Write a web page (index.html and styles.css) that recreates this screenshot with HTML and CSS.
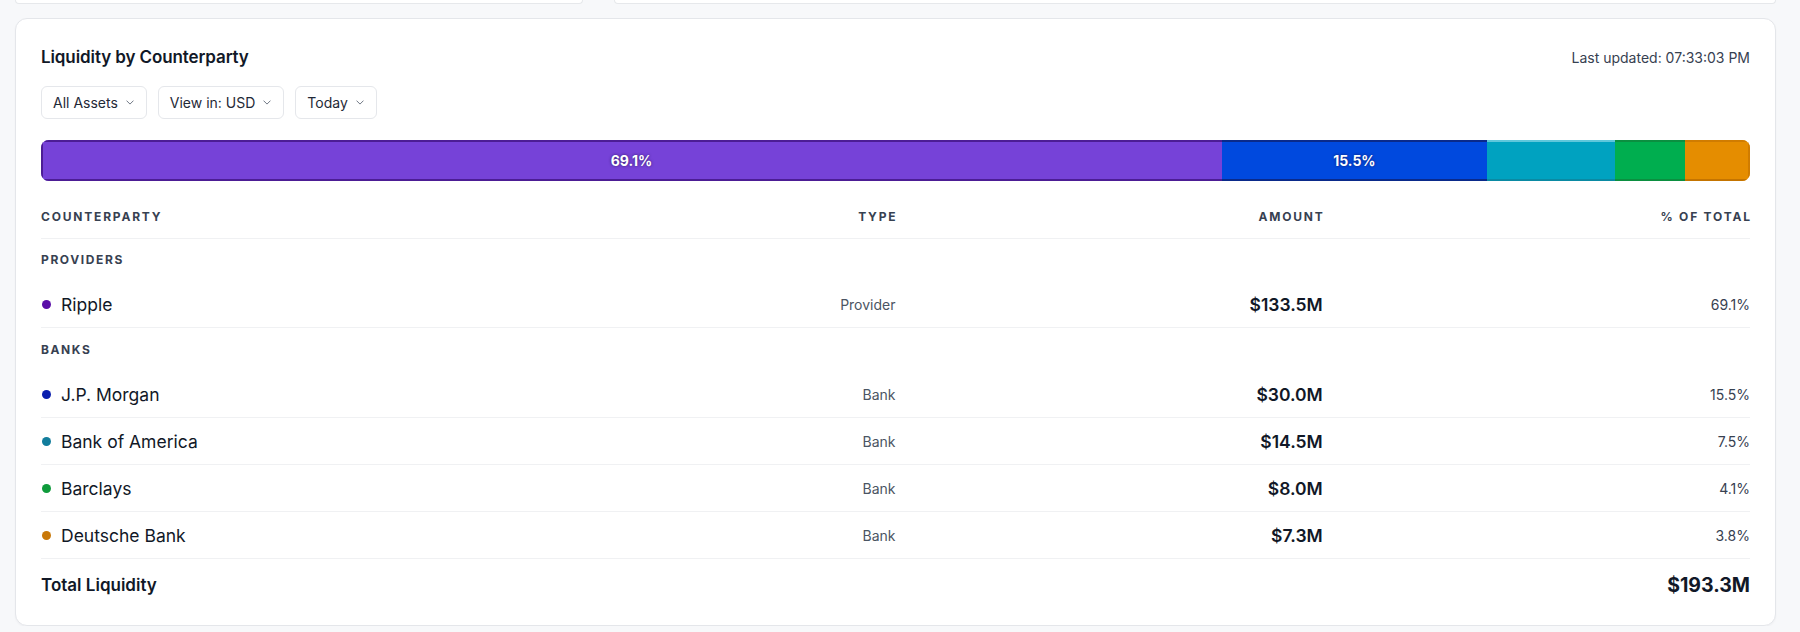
FILE: index.html
```html
<!DOCTYPE html>
<html lang="en">
<head>
<meta charset="utf-8">
<title>Liquidity by Counterparty</title>
<link rel="stylesheet" href="styles.css">
</head>
<body>
<div class="page">
  <div class="top-row">
    <div class="stub"></div>
    <div class="stub"></div>
  </div>
  <section class="card">
    <div class="card-head">
      <h2 class="title">Liquidity by Counterparty</h2>
      <span class="updated">Last updated: 07:33:03 PM</span>
    </div>
    <div class="filters">
      <button class="select">All Assets <svg class="chev" viewBox="0 0 10 6" width="8" height="5"><path d="M1 1l4 4 4-4" fill="none" stroke="#6b7280" stroke-width="1.2" stroke-linecap="round" stroke-linejoin="round"/></svg></button>
      <button class="select">View in: USD <svg class="chev" viewBox="0 0 10 6" width="8" height="5"><path d="M1 1l4 4 4-4" fill="none" stroke="#6b7280" stroke-width="1.2" stroke-linecap="round" stroke-linejoin="round"/></svg></button>
      <button class="select">Today <svg class="chev" viewBox="0 0 10 6" width="8" height="5"><path d="M1 1l4 4 4-4" fill="none" stroke="#6b7280" stroke-width="1.2" stroke-linecap="round" stroke-linejoin="round"/></svg></button>
    </div>
    <div class="bar">
      <div class="seg seg-purple" style="width:69.1%"><span>69.1%</span></div>
      <div class="seg seg-blue" style="width:15.5%"><span>15.5%</span></div>
      <div class="seg seg-teal" style="width:7.5%"></div>
      <div class="seg seg-green" style="width:4.1%"></div>
      <div class="seg seg-orange" style="width:3.8%"></div>
    </div>
    <div class="table">
      <div class="row head">
        <div>Counterparty</div>
        <div class="r">Type</div>
        <div class="r">Amount</div>
        <div class="r">% of Total</div>
      </div>
      <div class="group">Providers</div>
      <div class="row item">
        <div class="name"><i class="dot d-purple"></i>Ripple</div>
        <div class="r type">Provider</div>
        <div class="r amt">$133.5M</div>
        <div class="r pct">69.1%</div>
      </div>
      <div class="group group-next">Banks</div>
      <div class="row item">
        <div class="name"><i class="dot d-blue"></i>J.P. Morgan</div>
        <div class="r type">Bank</div>
        <div class="r amt">$30.0M</div>
        <div class="r pct">15.5%</div>
      </div>
      <div class="row item">
        <div class="name"><i class="dot d-teal"></i>Bank of America</div>
        <div class="r type">Bank</div>
        <div class="r amt">$14.5M</div>
        <div class="r pct">7.5%</div>
      </div>
      <div class="row item">
        <div class="name"><i class="dot d-green"></i>Barclays</div>
        <div class="r type">Bank</div>
        <div class="r amt">$8.0M</div>
        <div class="r pct">4.1%</div>
      </div>
      <div class="row item">
        <div class="name"><i class="dot d-orange"></i>Deutsche Bank</div>
        <div class="r type">Bank</div>
        <div class="r amt">$7.3M</div>
        <div class="r pct">3.8%</div>
      </div>
      <div class="total">
        <div class="total-label">Total Liquidity</div>
        <div class="total-value">$193.3M</div>
      </div>
    </div>
  </section>
</div>
</body>
</html>
```
FILE: styles.css
```css
* { box-sizing: border-box; }
html, body { margin: 0; padding: 0; }
body {
  background: #f7f8fa;
  font-family: Inter, "Liberation Sans", sans-serif;
  color: #111827;
}
.page {
  padding: 0 24px 0 15px;
}
.top-row {
  display: grid;
  grid-template-columns: 568px 1fr;
  gap: 31px;
  height: 4px;
  margin-bottom: 14px;
}
.stub {
  background: #fff;
  border: 1px solid #e6e8eb;
  border-top: none;
  border-radius: 0 0 6px 6px;
}
.card {
  background: #fff;
  border: 1px solid #e4e6ea;
  border-radius: 12px;
  padding: 28px 25px 15px;
  box-shadow: 0 1px 2px rgba(16, 24, 40, 0.04);
}
.card-head {
  display: flex;
  justify-content: space-between;
  align-items: center;
  height: 20px;
}
.title {
  margin: 0;
  font-size: 17px;
  font-weight: 600;
  color: #111827;
  letter-spacing: -0.1px;
}
.updated {
  font-size: 14px;
  color: #374151;
}
.filters {
  display: flex;
  gap: 11px;
  margin-top: 19px;
}
.select {
  display: inline-flex;
  align-items: center;
  gap: 8px;
  height: 33px;
  padding: 0 12px 0 11px;
  background: #fff;
  border: 1px solid #e5e7eb;
  border-radius: 6px;
  font-family: inherit;
  font-size: 14px;
  color: #1f2937;
}
.chev { display: block; }
.bar {
  display: flex;
  height: 41px;
  margin-top: 21px;
  border-radius: 8px;
  overflow: hidden;
}
.seg {
  display: flex;
  align-items: center;
  justify-content: center;
  color: #fff;
  font-size: 14px;
  font-weight: 700;
  text-shadow: 0 0 3px rgba(20, 10, 60, 0.7);
}
.seg-purple { background: #7642d8; box-shadow: inset 2px 2px 0 #4c1d95, inset 0 -2px 0 #4c1d95; }
.seg-blue { background: #0049de; box-shadow: inset 0 2px 0 #0a2a8a, inset 0 -2px 0 #0a2a8a; }
.seg-teal { background: #00a2c0; box-shadow: inset 0 2px 0 #5fc7db, inset 0 -2px 0 #0a8aa3; }
.seg-green { background: #00ae4f; box-shadow: inset 0 2px 0 #0b8f40, inset 0 -2px 0 #0b8f40; }
.seg-orange { background: #e58d00; box-shadow: inset -2px 2px 0 #d07c00, inset 0 -2px 0 #c47400; }
.table {
  margin-top: 28px;
}
.row {
  display: grid;
  grid-template-columns: repeat(4, 1fr);
  align-items: center;
}
.r { text-align: right; }
.head {
  font-size: 12px;
  font-weight: 700;
  letter-spacing: 1.8px;
  text-transform: uppercase;
  color: #374151;
  line-height: 16px;
  padding-bottom: 13px;
  border-bottom: 1px solid #f0f1f3;
}
.head .r { margin-right: -1.8px; }
.group {
  height: 42px;
  display: flex;
  align-items: center;
  padding-bottom: 2px;
  font-size: 12px;
  font-weight: 700;
  letter-spacing: 1.6px;
  text-transform: uppercase;
  color: #374151;
}
.group-next {
  height: 43px;
  padding-top: 2px;
}
.item {
  height: 47px;
  border-bottom: 1px solid #f0f1f3;
}
.name {
  display: flex;
  align-items: center;
  gap: 10px;
  font-size: 17.5px;
  color: #111827;
}
.dot {
  width: 9px;
  height: 9px;
  border-radius: 50%;
  margin-left: 1px;
  flex: none;
}
.d-purple { background: #5a0ea8; }
.d-blue { background: #0b1fae; }
.d-teal { background: #127d9c; }
.d-green { background: #0f9b3c; }
.d-orange { background: #c97808; }
.type {
  font-size: 14px;
  color: #4b5563;
}
.amt {
  font-size: 17.5px;
  font-weight: 600;
  color: #111827;
}
.pct {
  font-size: 14px;
  color: #374151;
}
.total {
  display: flex;
  justify-content: space-between;
  align-items: center;
  height: 51px;
}
.total-label {
  font-size: 17px;
  font-weight: 600;
  color: #111827;
}
.total-value {
  font-size: 19.5px;
  font-weight: 700;
  color: #111827;
}
```
